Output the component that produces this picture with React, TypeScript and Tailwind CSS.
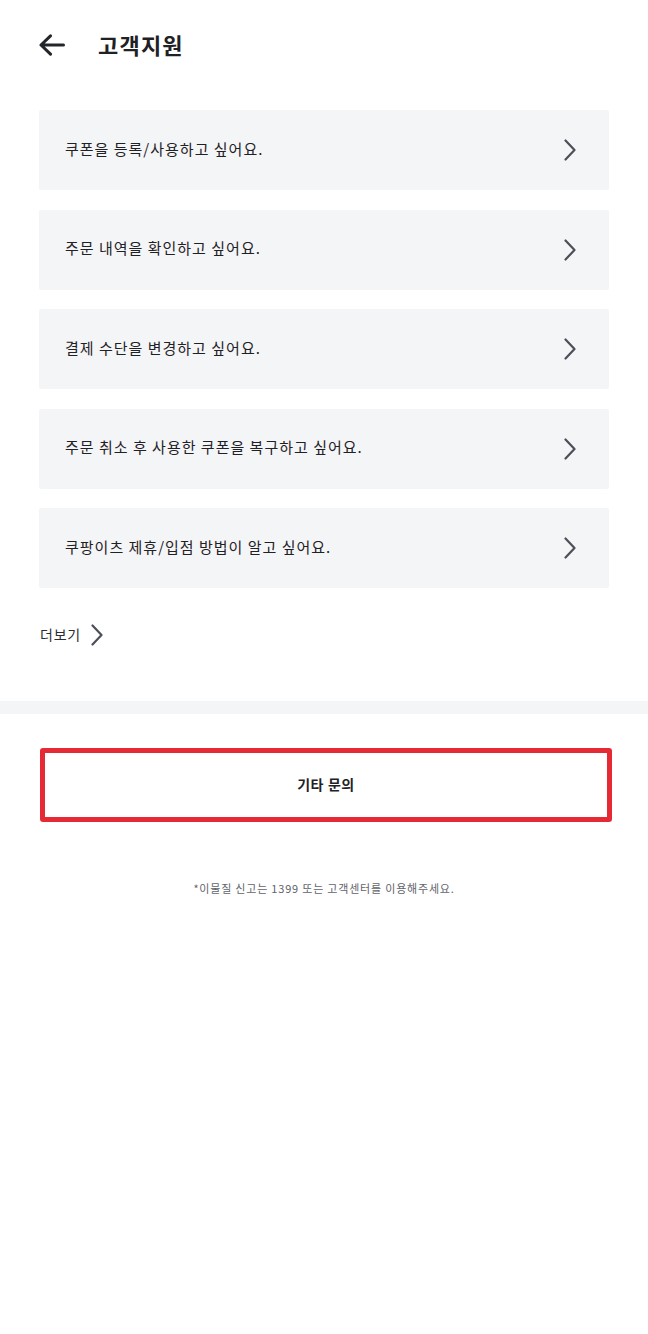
const items = [
  '쿠폰을 등록/사용하고 싶어요.',
  '주문 내역을 확인하고 싶어요.',
  '결제 수단을 변경하고 싶어요.',
  '주문 취소 후 사용한 쿠폰을 복구하고 싶어요.',
  '쿠팡이츠 제휴/입점 방법이 알고 싶어요.',
];

function Chevron({ className }: { className?: string }) {
  return (
    <svg viewBox="0 0 12 22" className={className} fill="none" stroke="currentColor" strokeWidth={2.2} strokeLinecap="round" strokeLinejoin="round">
      <path d="M1.5 1.5 L10.5 11 L1.5 20.5" />
    </svg>
  );
}

export default function App() {
  return (
    <div className="w-[648px] min-h-[1334px] bg-white text-[#1f2125]" style={{ fontFamily: '"Noto Sans CJK KR", "Noto Sans", sans-serif' }}>
      {/* header */}
      <div className="h-[90px] flex items-center pl-[39px] gap-[33px]">
        <svg viewBox="0 0 26 22" className="w-[26px] h-[22px] text-[#23262b]" fill="none" stroke="currentColor" strokeWidth={3} strokeLinecap="round" strokeLinejoin="round">
          <path d="M24.5 11 H2 M11.5 1.8 L2 11 L11.5 20.2" />
        </svg>
        <h1 className="text-[22px] font-bold tracking-[1.2px] leading-none -mt-[2px]">고객지원</h1>
      </div>

      {/* FAQ list */}
      <div className="px-[39px] pt-[20px] flex flex-col gap-[19.5px]">
        {items.map((item) => (
          <div key={item} className="h-[80px] bg-[#f4f5f7] rounded-[2px] flex items-center justify-between pl-[26px] pr-[33px]">
            <span className="text-[15px] tracking-[1px] leading-none -mt-[4px]">{item}</span>
            <Chevron className="w-[12px] h-[22px] text-[#4b5058]" />
          </div>
        ))}
      </div>

      <div className="mt-[35px] ml-[40px] flex items-center gap-[10px] h-[24px]">
        <span className="text-[14px] tracking-[0.8px] text-[#2a2d32] leading-none -mt-[3px]">더보기</span>
        <Chevron className="w-[12px] h-[22px] text-[#4b5058]" />
      </div>

      <div className="mt-[54px] h-[13px] bg-[#f4f5f7]" />

      <button className="mt-[34px] ml-[40px] w-[572px] h-[74px] border-[5px] border-[#e52a36] rounded-[3px] bg-white flex items-center justify-center">
        <span className="text-[14px] font-bold tracking-[0.6px] leading-none -mt-[3px]">기타 문의</span>
      </button>

      <p className="mt-[59px] text-center text-[11px] tracking-[0.8px] text-[#5f646b] leading-[14px]">*이물질 신고는 1399 또는 고객센터를 이용해주세요.</p>
    </div>
  );
}
